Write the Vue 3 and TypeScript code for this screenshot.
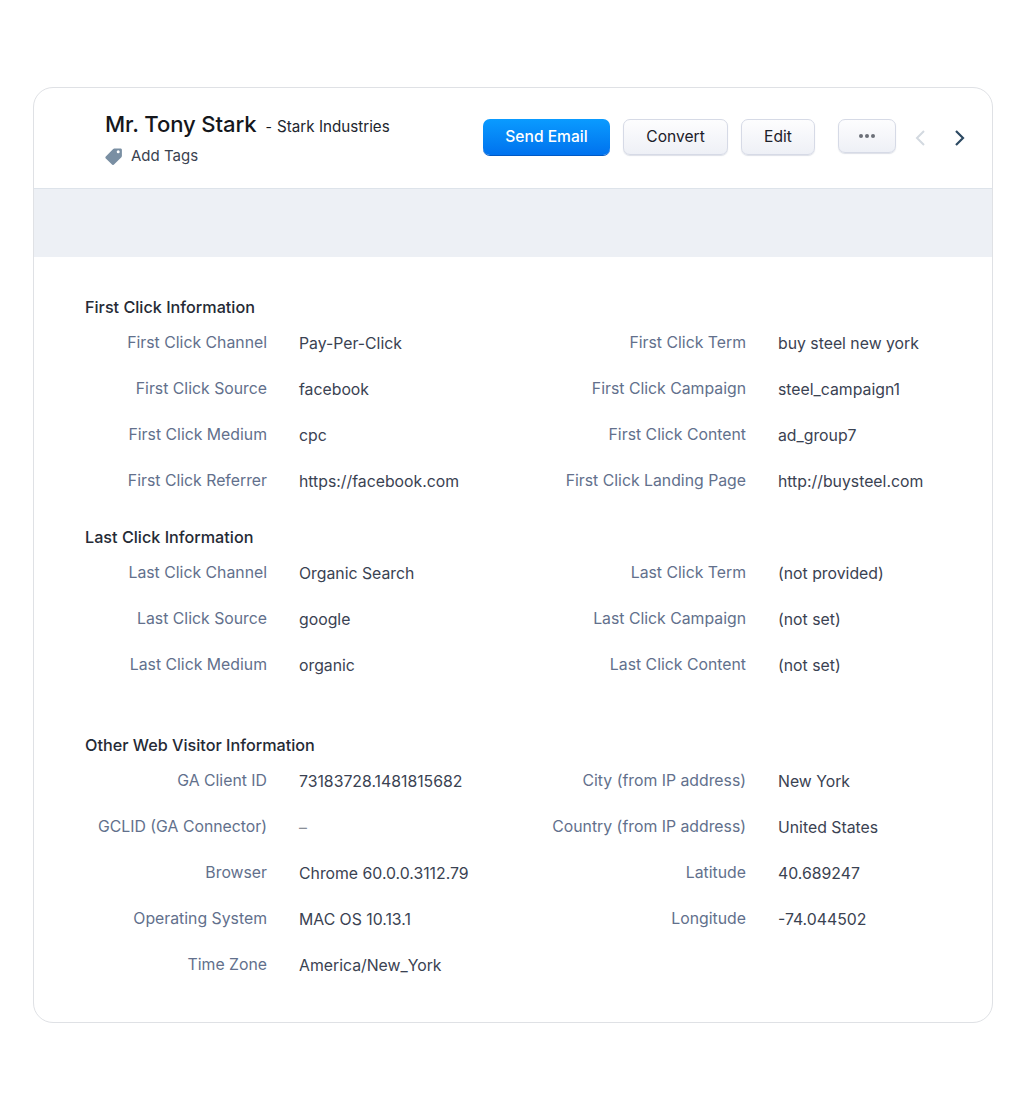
<script setup lang="ts">
  interface Field {
    label: string
    value: string
  }

  interface Section {
    title: string
    left: Field[]
    right: Field[]
    gap: string
  }

  const sections: Section[] = [
    {
      title: 'First Click Information',
      gap: 'near',
      left: [
        { label: 'First Click Channel', value: 'Pay-Per-Click' },
        { label: 'First Click Source', value: 'facebook' },
        { label: 'First Click Medium', value: 'cpc' },
        { label: 'First Click Referrer', value: 'https://facebook.com' },
      ],
      right: [
        { label: 'First Click Term', value: 'buy steel new york' },
        { label: 'First Click Campaign', value: 'steel_campaign1' },
        { label: 'First Click Content', value: 'ad_group7' },
        { label: 'First Click Landing Page', value: 'http://buysteel.com' },
      ],
    },
    {
      title: 'Last Click Information',
      gap: 'far',
      left: [
        { label: 'Last Click Channel', value: 'Organic Search' },
        { label: 'Last Click Source', value: 'google' },
        { label: 'Last Click Medium', value: 'organic' },
      ],
      right: [
        { label: 'Last Click Term', value: '(not provided)' },
        { label: 'Last Click Campaign', value: '(not set)' },
        { label: 'Last Click Content', value: '(not set)' },
      ],
    },
    {
      title: 'Other Web Visitor Information',
      gap: 'near',
      left: [
        { label: 'GA Client ID', value: '73183728.1481815682' },
        { label: 'GCLID (GA Connector)', value: '–' },
        { label: 'Browser', value: 'Chrome 60.0.0.3112.79' },
        { label: 'Operating System', value: 'MAC OS 10.13.1' },
        { label: 'Time Zone', value: 'America/New_York' },
      ],
      right: [
        { label: 'City (from IP address)', value: 'New York' },
        { label: 'Country (from IP address)', value: 'United States' },
        { label: 'Latitude', value: '40.689247' },
        { label: 'Longitude', value: '-74.044502' },
      ],
    },
  ]
</script>

<template>
  <div class="page">
    <div class="card">
      <header class="head">
        <div class="who">
          <div class="name-line">
            <span class="name">Mr. Tony Stark</span>
            <span class="dash">-</span>
            <span class="company">Stark Industries</span>
          </div>
          <div class="tags">
            <svg class="tag-icon" width="18" height="18" viewBox="0 0 18 18">
              <path
                fill="#7a8fa3"
                fill-rule="evenodd"
                d="M.8 9.4 8.2 2c.3-.3.7-.5 1.1-.5h6.2c.8 0 1.4.6 1.4 1.4v6.2c0 .4-.2.8-.5 1.1l-7.4 7.4c-.6.6-1.4.6-2 0L.8 11.4c-.6-.6-.6-1.4 0-2ZM13.2 3.3a1.5 1.5 0 1 0 0 3 1.5 1.5 0 0 0 0-3Z"
              />
            </svg>
            <span>Add Tags</span>
          </div>
        </div>
        <div class="actions">
          <button class="btn primary">Send Email</button>
          <button class="btn convert">Convert</button>
          <button class="btn edit">Edit</button>
          <button class="btn more">
            <i></i><i></i><i></i>
          </button>
          <svg class="chev prev" width="12" height="18" viewBox="0 0 12 18">
            <path d="M10 2 3 9l7 7" fill="none" stroke="#d3d9e0" stroke-width="2" />
          </svg>
          <svg class="chev next" width="12" height="18" viewBox="0 0 12 18">
            <path d="M2 2l7 7-7 7" fill="none" stroke="#2d4a63" stroke-width="2.2" />
          </svg>
        </div>
      </header>

      <div class="band"></div>

      <div class="body">
        <section v-for="s in sections" :key="s.title" class="section" :class="s.gap">
          <h3>{{ s.title }}</h3>
          <div class="cols">
            <div class="col col-left">
              <div v-for="f in s.left" :key="f.label" class="row">
                <span class="label">{{ f.label }}</span>
                <span class="value" :class="{ empty: f.value === '–' }">{{ f.value }}</span>
              </div>
            </div>
            <div class="col col-right">
              <div v-for="f in s.right" :key="f.label" class="row">
                <span class="label">{{ f.label }}</span>
                <span class="value">{{ f.value }}</span>
              </div>
            </div>
          </div>
        </section>
      </div>
    </div>
  </div>
</template>

<style scoped>
  .page {
    width: 1026px;
    height: 1110px;
    padding: 87px 33px 0;
    box-sizing: border-box;
    background: #fff;
    font-family: Inter, 'Liberation Sans', sans-serif;
  }

  .card {
    width: 960px;
    height: 936px;
    box-sizing: border-box;
    border: 1px solid #dfe1e5;
    border-radius: 20px;
    overflow: hidden;
  }

  .head {
    height: 101px;
    box-sizing: border-box;
    border-bottom: 1px solid #dde3ea;
    display: flex;
    justify-content: space-between;
    padding-left: 71px;
  }

  .who {
    padding-top: 21px;
  }

  .name-line {
    display: flex;
    align-items: baseline;
    color: #15171c;
  }

  .name {
    font-size: 22.1px;
    font-weight: 500;
    line-height: 30px;
    letter-spacing: -0.1px;
  }

  .dash {
    font-size: 14px;
    margin-left: 9px;
  }

  .company {
    font-size: 15.2px;
    margin-left: 5px;
    color: #22262e;
  }

  .tags {
    display: flex;
    align-items: center;
    gap: 8px;
    margin-top: 5px;
    font-size: 15px;
    line-height: 24px;
    color: #3a4250;
  }

  .actions {
    display: flex;
    align-items: flex-start;
    padding-top: 31px;
    padding-right: 26px;
  }

  .btn {
    height: 36px;
    box-sizing: border-box;
    border: 1px solid #d6dae6;
    border-radius: 7px;
    background: linear-gradient(#fdfdfe, #eef0f6);
    box-shadow: 0 1px 1px rgba(120, 130, 160, 0.25);
    font-family: inherit;
    font-size: 15.6px;
    font-weight: 400;
    line-height: 32px;
    color: #1c2029;
    padding: 0;
  }

  .primary {
    width: 127px;
    border: none;
    background: linear-gradient(#0a9bff, #0072ee);
    box-shadow: 0 1px 0 #0059c4;
    color: #fff;
    font-weight: 500;
  }

  .convert {
    width: 105px;
    margin-left: 13px;
  }

  .edit {
    width: 74px;
    margin-left: 13px;
  }

  .more {
    width: 58px;
    height: 34px;
    margin-left: 23px;
    display: flex;
    align-items: center;
    justify-content: center;
    gap: 2px;
  }

  .more i {
    width: 4px;
    height: 4px;
    border-radius: 50%;
    background: #6c7078;
  }

  .chev {
    margin-top: 10px;
  }

  .prev {
    margin-left: 18px;
  }

  .next {
    margin-left: 28px;
  }

  .band {
    height: 68px;
    background: #edf0f5;
  }

  .body {
    padding: 38px 0 0 51px;
  }

  .section.near {
    margin-bottom: 14px;
  }

  .section.far {
    margin-bottom: 38px;
  }

  h3 {
    margin: 0;
    font-size: 16.2px;
    font-weight: 500;
    line-height: 24px;
    color: #252a35;
  }

  .cols {
    display: grid;
    grid-template-columns: 479px 1fr;
    margin-top: 8px;
  }

  .row {
    display: grid;
    grid-template-columns: 182px 1fr;
    column-gap: 32px;
    height: 46px;
    padding-top: 5px;
    box-sizing: border-box;
    line-height: 24px;
    font-size: 15.8px;
  }

  .label {
    justify-self: end;
    color: #62708c;
    white-space: nowrap;
    margin-top: -1px;
  }

  .value {
    color: #3a4252;
    white-space: nowrap;
  }

  .value.empty {
    color: #8a8f98;
  }
</style>
